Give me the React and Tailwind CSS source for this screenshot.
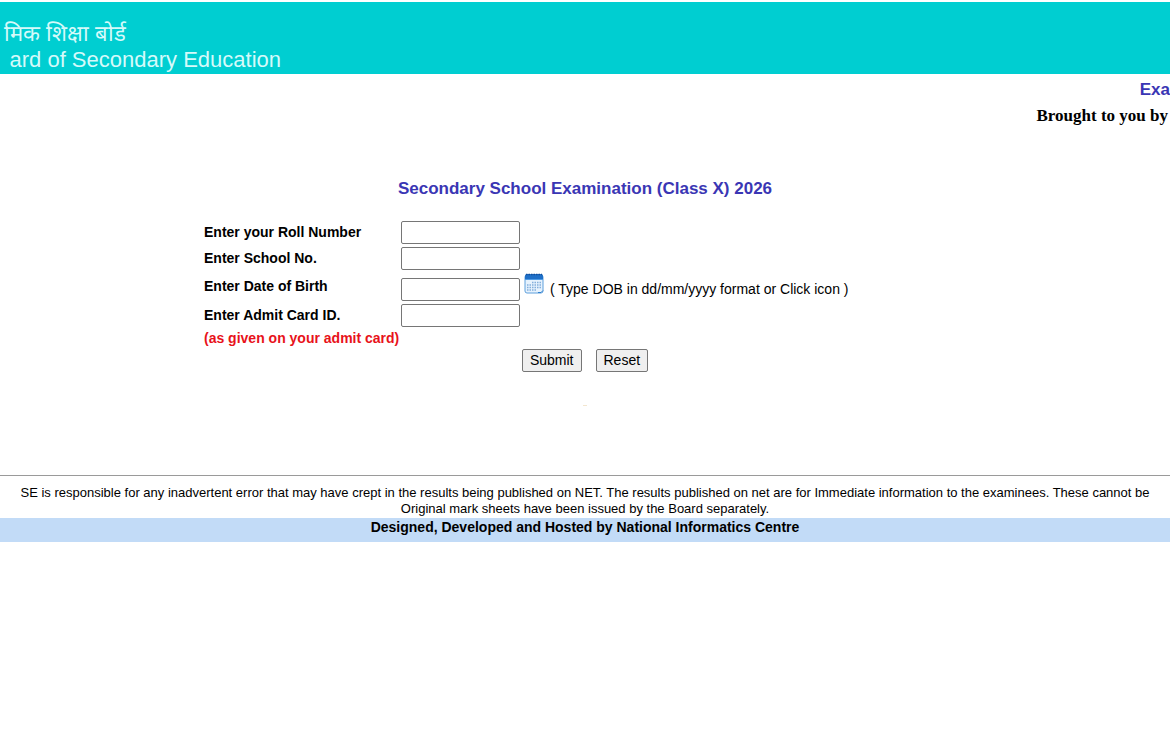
const inputClass =
  'h-[23px] w-[119px] rounded-[2px] border border-[#767676] bg-white px-1 text-sm text-black';
const labelClass = 'w-[197px] shrink-0 pb-0.5 text-sm leading-4 font-bold whitespace-nowrap';
const buttonClass =
  'h-[23px] rounded-[2px] border border-[#767676] bg-[#efefef] px-[7px] pb-0.5 text-sm leading-4';

function CalendarIcon() {
  return (
    <svg width="20" height="21" viewBox="0 0 20 21" aria-hidden="true">
      <rect x="1" y="2" width="18" height="18" rx="2" fill="#e6f2fd" stroke="#5fa0dc" />
      <path d="M1 7V3a2 2 0 0 1 2-2h14a2 2 0 0 1 2 2v4z" fill="#1f70c8" />
      <path d="M2 1.5h16" stroke="#124f9c" strokeWidth="1.5" strokeDasharray="1.5 1" />
      <path d="M1 6.5h18" stroke="#4d9be6" />
      <path d="M8 9.5h9M3 12h14M3 14.5h14M3 17h9" stroke="#83aedb" strokeWidth="1.5" strokeDasharray="1.5 1" />
      <path d="M14 19.5h3l2-2" fill="none" stroke="#2f80cf" />
    </svg>
  );
}

function Field({ id, label }) {
  return (
    <div className="flex h-[23px] items-center">
      <label htmlFor={id} className={labelClass}>{label}</label>
      <input id={id} type="text" className={inputClass} />
    </div>
  );
}

export default function App() {
  return (
    <div className="overflow-hidden bg-white pt-0.5 font-['Liberation_Sans',Arial,sans-serif] text-black">
      <header className="flex h-[72px] flex-col bg-[#00ced1] pt-[18px] text-[22px] whitespace-nowrap text-[#d5fafa]">
        <div className="flex w-[126px] justify-end leading-7">
          <span lang="hi">मिक शिक्षा बोर्ड</span>
        </div>
        <div className="flex w-[281px] justify-end leading-6">
          <span>ard of Secondary Education</span>
        </div>
      </header>

      <div className="flex flex-col items-end whitespace-nowrap">
        <p className="pt-1 text-[17px] leading-6 font-bold text-[#3a36b4]">Exa</p>
        <p className="pt-0.5 pr-0.5 font-['Liberation_Serif','Times_New_Roman',serif] text-[17px] leading-6 font-bold">
          Brought to you by
        </p>
      </div>

      <main className="pt-[49px]">
        <h1 className="text-center text-[17px] leading-6 font-bold text-[#3a36b4]">
          Secondary School Examination (Class X) 2026
        </h1>
        <form className="mx-auto mt-5 flex w-[762px] max-w-full flex-col gap-[3px]">
          <Field id="roll" label="Enter your Roll Number" />
          <Field id="school" label="Enter School No." />
          <div className="flex h-7 items-center">
            <label htmlFor="dob" className={labelClass}>Enter Date of Birth</label>
            <div className="flex h-7 items-end">
              <input id="dob" type="text" className={inputClass} />
              <button type="button" aria-label="Choose date" className="ml-1 self-start">
                <CalendarIcon />
              </button>
              <span className="ml-1.5 pb-1 text-sm leading-4 whitespace-nowrap">
                ( Type DOB in dd/mm/yyyy format or Click icon )
              </span>
            </div>
          </div>
          <Field id="admit" label="Enter Admit Card ID." />
          <p className="text-sm leading-4 font-bold text-[#e8121a]">(as given on your admit card)</p>
          <div className="flex justify-center gap-3.5">
            <button type="submit" className={buttonClass}>Submit</button>
            <button type="reset" className={buttonClass}>Reset</button>
          </div>
        </form>
        <div className="mx-auto mt-[33px] h-px w-1 bg-[#f3e6cf]" />
      </main>

      <footer className="mt-[69px] border-t border-[#9a9a9a] pt-[9px]">
        <div className="flex flex-col items-center pb-px text-[13px] leading-4 whitespace-nowrap">
          <p>
            SE is responsible for any inadvertent error that may have crept in the results being published on NET. The
            results published on net are for Immediate information to the examinees. These cannot be
          </p>
          <p>Original mark sheets have been issued by the Board separately.</p>
        </div>
        <p className="h-6 bg-[#c2dbf7] text-center text-sm leading-[18px] font-bold">
          Designed, Developed and Hosted by National Informatics Centre
        </p>
      </footer>
    </div>
  );
}
